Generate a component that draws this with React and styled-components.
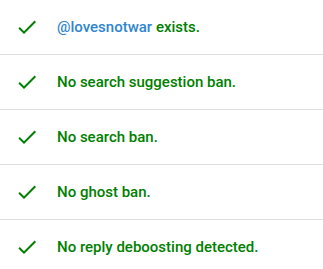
import React from "react";
import styled, { createGlobalStyle } from "styled-components";

const Global = createGlobalStyle`
  html, body { margin: 0; padding: 0; background: #fff; }
  body { font-family: Roboto, "Noto Sans", sans-serif; }
`;

const List = styled.ul`
  list-style: none;
  margin: 0;
  padding: 0;
  width: 323px;
`;

const Row = styled.li`
  display: flex;
  align-items: center;
  height: 54px;
  padding-left: 15px;
  border-bottom: 1px solid #dedede;
  box-sizing: content-box;
`;

const IconBox = styled.span`
  display: flex;
  width: 42px;
  flex-shrink: 0;
  svg { display: block; }
`;

const Text = styled.span`
  font-family: Roboto, sans-serif;
  font-size: 15px;
  font-weight: 500;
  color: #008000;
`;

const Handle = styled.a`
  color: #2f86cf;
  text-decoration: none;
`;

const Check = () => (
  <svg width="24" height="24" viewBox="0 0 24 24">
    <path fill="#008000" d="M9 16.17L4.83 12l-1.42 1.41L9 19 21 7l-1.41-1.41z" />
  </svg>
);

const items = [
  <>
    <Handle href="#">@lovesnotwar</Handle> exists.
  </>,
  "No search suggestion ban.",
  "No search ban.",
  "No ghost ban.",
  "No reply deboosting detected.",
];

export default function App() {
  return (
    <>
      <Global />
      <List>
        {items.map((t, i) => (
          <Row key={i}>
            <IconBox>
              <Check />
            </IconBox>
            <Text>{t}</Text>
          </Row>
        ))}
      </List>
    </>
  );
}
